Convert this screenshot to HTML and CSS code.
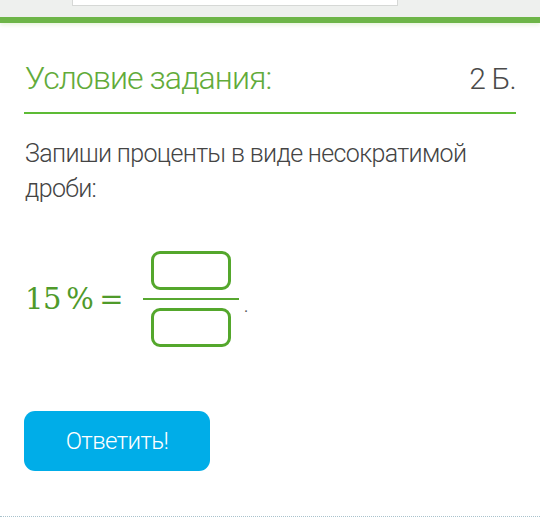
FILE: index.html
```html
<!DOCTYPE html>
<html lang="ru">
<head>
<meta charset="utf-8">
<link rel="stylesheet" href="styles.css">
</head>
<body>
<div class="topbar">
  <div class="topbox"></div>
</div>
<div class="greenline"></div>
<main class="content">
  <div class="header">
    <h1 class="title">Условие задания:</h1>
    <div class="points">2 Б.</div>
  </div>
  <p class="task">Запиши проценты в виде несократимой дроби:</p>
  <div class="math">
    <span class="expr">15&#8201;%<span class="eq">=</span></span>
    <span class="frac">
      <span class="box"></span>
      <span class="bar"></span>
      <span class="box"></span>
    </span>
    <span class="dot">.</span>
  </div>
  <button class="answer">Ответить!</button>
</main>
<div class="dotted"></div>
</body>
</html>
```
FILE: styles.css
```css
html, body {
  margin: 0;
  padding: 0;
  background: #ffffff;
  font-family: Roboto, "Noto Sans", sans-serif;
}
.topbar {
  height: 17px;
  background: #eef0ee;
  position: relative;
}
.topbox {
  margin-left: 72px;
  width: 326px;
  height: 6px;
  background: #ffffff;
  border: 1px solid #d6d8d6;
  border-top: none;
  box-sizing: border-box;
}
.greenline {
  height: 6px;
  background: #6db548;
  box-shadow: 0 2px 4px rgba(180, 220, 150, 0.35);
}
.content {
  padding: 0 24px 0 24px;
}
.header {
  display: flex;
  justify-content: space-between;
  align-items: baseline;
  border-bottom: 2px solid #5dbb35;
  margin-top: 36px;
  padding-bottom: 15px;
}
.title {
  margin: 0;
  font-weight: 300;
  font-size: 32px;
  line-height: 38px;
  color: #62ab3a;
  padding-left: 1px;
  letter-spacing: -0.9px;
}
.points {
  font-weight: 300;
  font-size: 30px;
  color: #4a4a4a;
  letter-spacing: -0.8px;
}
.task {
  margin: 22px 0 0 1px;
  font-weight: 300;
  font-size: 25px;
  line-height: 35px;
  color: #444444;
  letter-spacing: -0.65px;
}
.math {
  display: flex;
  align-items: center;
  margin-top: 45px;
  margin-left: 1px;
}
.expr {
  font-family: "DejaVu Serif", "Liberation Serif", serif;
  font-size: 29px;
  color: #4f9a2a;
  letter-spacing: -0.5px;
}
.eq {
  margin-left: 6px;
}
.frac {
  display: flex;
  flex-direction: column;
  align-items: center;
  margin-left: 20px;
}
.box {
  width: 80px;
  height: 39px;
  border: 3px solid #54a72c;
  border-radius: 9px;
  box-sizing: border-box;
}
.bar {
  width: 96px;
  height: 2px;
  background: #57a730;
  margin: 8px 0 8px 0;
}
.dot {
  font-size: 16px;
  color: #555;
  margin-left: 5px;
  margin-top: 14px;
}
.answer {
  display: block;
  margin-top: 64px;
  width: 186px;
  height: 60px;
  border: none;
  border-radius: 11px;
  background: #00ade8;
  color: #ffffff;
  font-family: Roboto, "Noto Sans", sans-serif;
  font-weight: 300;
  font-size: 24px;
  letter-spacing: -0.6px;
  padding: 0;
}
.dotted {
  margin-top: 45px;
  border-top: 1px dotted #a9c2cc;
}
```
